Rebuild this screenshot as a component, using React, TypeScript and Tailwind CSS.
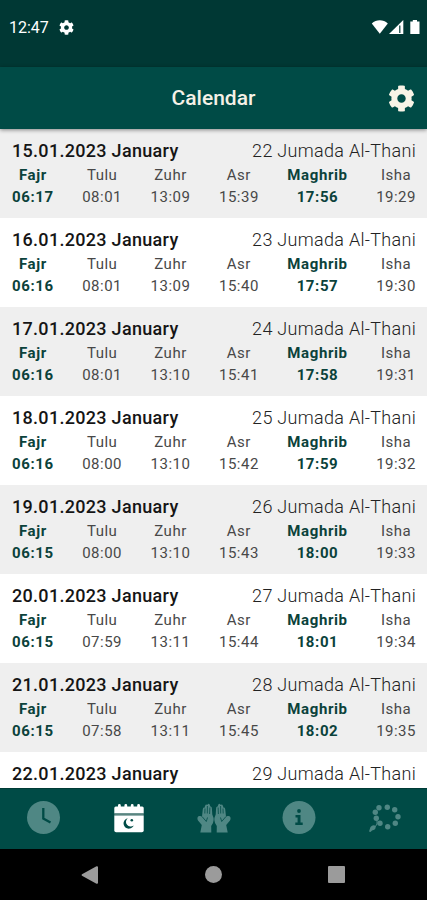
import React from "react";
import { FaCog } from "react-icons/fa";

const PRAYERS = [
    { name: "Fajr", main: true },
    { name: "Tulu", main: false },
    { name: "Zuhr", main: false },
    { name: "Asr", main: false },
    { name: "Maghrib", main: true },
    { name: "Isha", main: false },
];

const DAYS = [
    { date: "15.01.2023 January", hijri: "22 Jumada Al-Thani", times: ["06:17", "08:01", "13:09", "15:39", "17:56", "19:29"] },
    { date: "16.01.2023 January", hijri: "23 Jumada Al-Thani", times: ["06:16", "08:01", "13:09", "15:40", "17:57", "19:30"] },
    { date: "17.01.2023 January", hijri: "24 Jumada Al-Thani", times: ["06:16", "08:01", "13:10", "15:41", "17:58", "19:31"] },
    { date: "18.01.2023 January", hijri: "25 Jumada Al-Thani", times: ["06:16", "08:00", "13:10", "15:42", "17:59", "19:32"] },
    { date: "19.01.2023 January", hijri: "26 Jumada Al-Thani", times: ["06:15", "08:00", "13:10", "15:43", "18:00", "19:33"] },
    { date: "20.01.2023 January", hijri: "27 Jumada Al-Thani", times: ["06:15", "07:59", "13:11", "15:44", "18:01", "19:34"] },
    { date: "21.01.2023 January", hijri: "28 Jumada Al-Thani", times: ["06:15", "07:58", "13:11", "15:45", "18:02", "19:35"] },
    { date: "22.01.2023 January", hijri: "29 Jumada Al-Thani", times: [] },
];

const BEADS = [
    [14, 4.7], [22.3, 4.3], [29.7, 6.7], [33, 13.7], [30.3, 20.3], [22.7, 23.7], [15, 20.3], [11.3, 15.3], [10.3, 9.3],
];

const StatusBar = () => (
    <div className="flex h-[67px] shrink-0 items-start justify-between bg-[#003834] pt-[18px] pl-[9px] pr-[6px] text-white">
        <div className="flex h-[19px] items-center">
            <span className="w-[38px] whitespace-nowrap text-[16px] leading-[19px]">12:47</span>
            <FaCog className="ml-[12px] h-[15px] w-[15px]" />
        </div>
        <svg className="h-[18px] w-[50px]" viewBox="0 0 50 18" fill="currentColor">
            <path d="M.8 5.500C5.300 1.200 12.300 1.200 16.800 5.500L8.800 15.800Z" />
            <path d="M18 16L32.300 2V16Z" />
            <path d="M28.800 7.500V15" stroke="#003834" strokeWidth="1.200" />
            <path d="M39.300 3.500H41.800V2H46V3.500H48.500V16H39.300Z" />
        </svg>
    </div>
);

const ClockIcon = () => (
    <svg className="h-[34px] w-[34px]" viewBox="0 0 34 34" fill="currentColor">
        <circle cx="16.500" cy="16.500" r="16.500" />
        <path d="M16.300 7V17.500L23.500 21.500" stroke="#004b46" strokeWidth="2.300" fill="none" />
    </svg>
);

const CalendarIcon = () => (
    <svg className="h-[30px] w-[30px]" viewBox="0 0 30 30" fill="#fff">
        <path d="M.3 10.500V5Q.3 3.500 1.800 3.500H4V2.500a1.400 1.400 0 0 1 2.800 0V3.500h3.600V2.500a1.400 1.400 0 0 1 2.800 0V3.500h3.600V2.500a1.400 1.400 0 0 1 2.800 0V3.500h3.600V2.500a1.400 1.400 0 0 1 2.800 0V3.500h2.200Q29.700 3.500 29.700 5V10.500Z" />
        <path d="M.3 10.500H29.700V12.500H.3Z" fill="#5b8580" />
        <path d="M.3 12.500H29.700V27.500Q29.700 29.300 27.900 29.300H2.100Q.3 29.300 .3 27.500Z" />
        <path d="M13.700 15.200a5.300 5.300 0 1 0 6 7.300A4.300 4.300 0 0 1 13.700 15.200Z" fill="#004b46" />
        <circle cx="17.800" cy="17.200" r="1.300" fill="#004b46" />
    </svg>
);

const Hand = () => (
    <>
        <path d="M3.300 29.500L4.800 22L1 17.500Q0 16 .6 14.300Q1.500 12.500 3.200 13L5 13.500L5.800 6.200Q6.200 4 7.500 4.800L8 3Q9 .8 10.200 2L11 .9Q12.600 .2 13 2.500L13.400 3.500Q15 3.500 14.900 5.500L15.300 11.500L16.600 15Q17 17 16 20L14.200 23L14.300 29.500Z" />
        <path d="M8 5.500L7.800 10.500M10.400 3L10.300 10.500M12.900 4.500L12.600 11M5 13.500L9.300 18.500M9.300 18.500L10.500 14.500" stroke="#004b46" strokeWidth=".8" fill="none" />
    </>
);

const HandsIcon = () => (
    <svg className="h-[30px] w-[34px]" viewBox="0 0 34 30" fill="currentColor">
        <Hand />
        <g transform="translate(34 0) scale(-1 1)">
            <Hand />
        </g>
    </svg>
);

const InfoIcon = () => (
    <svg className="h-[34px] w-[34px]" viewBox="0 0 34 34" fill="currentColor">
        <circle cx="17" cy="16.500" r="16.500" />
        <circle cx="17" cy="10" r="1.900" fill="#004b46" />
        <path d="M13.500 14H18.500V21.500H20.700V24H13.300V21.500H15.600V16.500H13.500Z" fill="#004b46" />
    </svg>
);

const BeadsIcon = () => (
    <svg className="h-[30px] w-[38px]" viewBox="0 0 38 30" fill="currentColor">
        {BEADS.map(([cx, cy]) => (
            <circle key={`${cx}-${cy}`} cx={cx} cy={cy} r="2.700" />
        ))}
        <path d="M12 16V21L10 24" stroke="currentColor" fill="none" />
        <path d="M4 28.500L5.500 24Q7.500 21.500 9.800 22.500Q11.800 24.500 9.300 26.800L7 27.500L5.500 29Z" />
    </svg>
);

export default function App() {
    return (
        <div className="flex h-[900px] w-[427px] flex-col overflow-hidden bg-white font-['Roboto',sans-serif]">
            <StatusBar />

            <header className="z-10 grid h-[62px] shrink-0 grid-cols-3 items-center bg-[#004b46] shadow-[0_1px_4px_rgba(0,0,0,0.45)]">
                <h1 className="col-start-2 pt-[2px] text-center text-[21px] font-medium text-[#f5f1e6]">Calendar</h1>
                <FaCog className="mr-[12px] h-[27px] w-[27px] justify-self-end text-[#f8f3e6]" />
            </header>

            <main className="min-h-0 flex-1 overflow-hidden">
                {DAYS.map((day) => (
                    <section key={day.date} className="h-[89px] pt-[10px] pr-[11px] pl-[12px] odd:bg-[#efefef]">
                        <div className="flex justify-between text-[18px] leading-6 whitespace-nowrap">
                            <h2 className="font-medium tracking-[0.3px] text-[#151515]">{day.date}</h2>
                            <p className="font-light tracking-[0.3px] text-[#222]">{day.hijri}</p>
                        </div>
                        <div className="flex justify-between pt-px text-center text-[15px] leading-[22px]">
                            {day.times.map((time, i) => (
                                <div
                                    key={PRAYERS[i].name}
                                    className={PRAYERS[i].main ? "font-bold tracking-[0.6px] text-[#0b423b]" : "font-normal tracking-[0.5px] text-[#484848]"}
                                >
                                    <div>{PRAYERS[i].name}</div>
                                    <div>{time}</div>
                                </div>
                            ))}
                        </div>
                    </section>
                ))}
            </main>

            <nav className="grid h-[61px] shrink-0 grid-cols-5 place-items-center border-t border-[#003b36] bg-[#004b46] pb-[2px] pl-px text-[#4f8784]">
                <ClockIcon />
                <CalendarIcon />
                <HandsIcon />
                <InfoIcon />
                <BeadsIcon />
            </nav>

            <div className="flex h-[51px] shrink-0 items-center justify-between bg-black pr-[82px] pl-[81px] text-[#9b9b9b]">
                <svg className="h-[18px] w-[17px]" viewBox="0 0 17 18" fill="currentColor">
                    <path d="M1 8.200Q0 9 1 9.800L15.500 17.800Q17 18 17 17V1Q17 0 15.500.2Z" />
                </svg>
                <div className="h-[17px] w-[17px] rounded-full bg-current" />
                <div className="h-[17px] w-[17px] rounded-[1px] bg-current" />
            </div>
        </div>
    );
}
